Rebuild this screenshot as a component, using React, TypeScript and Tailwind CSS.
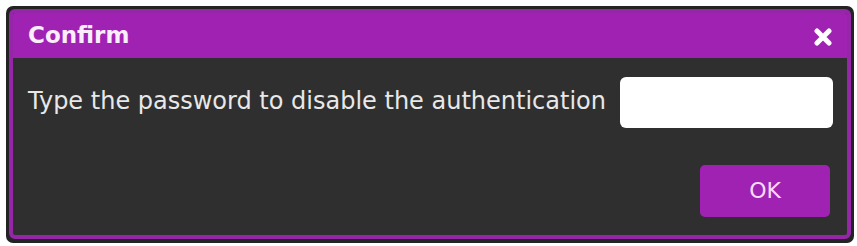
import React from "react";

export default function App() {
  return (
    <div className="w-[857px] h-[246px] bg-white pl-[6px] pt-[6px]" style={{ fontFamily: '"DejaVu Sans", "Liberation Sans", sans-serif' }}>
      <div className="w-[848px] h-[237px] bg-[#232323] rounded-[7px] pt-[3px] pl-[3px] pr-[3px] pb-[4px]">
        <div className="h-full flex flex-col rounded-[6px] border-[4px] border-[#9626a8] bg-[#2f2f2f] overflow-hidden">
          <div className="h-[45px] -mt-[4px] -mx-[4px] pt-[4px] px-[4px] box-content bg-[#a022b2] flex items-center justify-between">
            <span className="pl-[15px] text-[23px] font-bold text-[#fbeefc] leading-none">Confirm</span>
            <svg width="18" height="18" viewBox="0 0 18 18" className="mr-[15px] mt-[2px]">
              <path d="M3 3 L15 15 M15 3 L3 15" stroke="#ffffff" strokeWidth="5" strokeLinecap="round" />
            </svg>
          </div>
          <div className="flex-1 flex flex-col pl-[15px] pr-[14px]">
            <div className="mt-[19px] flex items-center justify-between">
              <span className="text-[24px] text-[#e8e8e8] leading-none -mt-[3px]">Type the password to disable the authentication</span>
              <input className="w-[213px] h-[51px] bg-white rounded-[6px] outline-none border-0" />
            </div>
            <button className="self-end mt-[37px] mr-[3px] w-[130px] h-[52px] rounded-[5px] bg-[#a022b2] text-[22px] text-[#f6dcf8] leading-none">
              OK
            </button>
          </div>
        </div>
      </div>
    </div>
  );
}
